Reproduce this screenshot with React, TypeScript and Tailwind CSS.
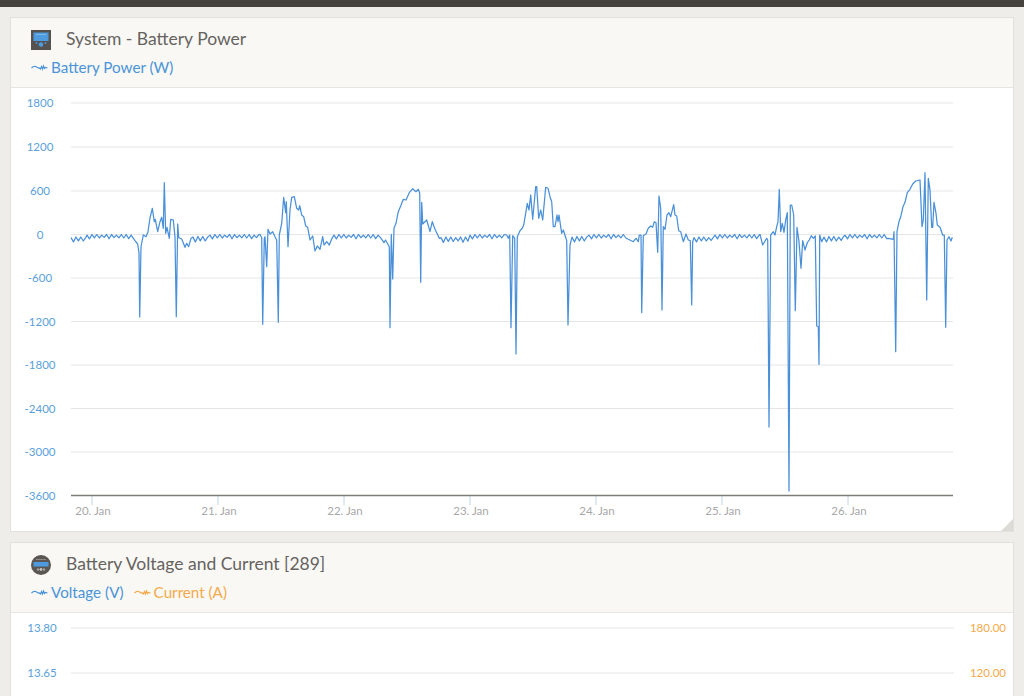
import React from "react";

type Pt = [number, number];
const BLUE = "#4a90d9";
const ORANGE = "#f5a94a";

const r = (x0: number, x1: number, top: number, bot: number): Pt[] => {
  const out: Pt[] = [];
  let i = 0;
  for (let x = x0; x < x1; x += 2.45, i++) {
    const jitter = (((i * 7) % 5) / 4) * 1.1;
    out.push([x, i % 2 === 0 ? top + (i % 6 === 0 ? 0.6 : 0) : bot + (i % 8 === 1 ? 1.2 : 0) - jitter * 0.5]);
  }
  return out;
};

const trace: Pt[] = [
  ...r(71, 87, 237, 241),
  ...r(87, 133, 234.5, 238),
  [135, 240.7], [137.7, 244], [139, 253], [139.7, 317], [141, 246.7], [143.3, 235], [146, 236.7], [148, 231.7],
  [150, 218], [152.3, 208.3], [154.3, 221.7], [155.3, 219.3], [157.7, 231.7], [160, 221.7], [161.7, 217.3], [163.3, 228.3],
  [164.3, 182.7], [165.7, 233.3], [167, 227.3], [169.3, 238.3], [170.7, 219.3], [173.3, 220], [175, 236.7], [176.3, 316.7],
  [177.7, 224], [178.7, 237.7], [181.7, 239], [185, 247.3], [186.7, 243.3], [188.7, 246.7], [191, 238.3],
  ...r(193, 210, 236.5, 241),
  ...r(210, 260, 234.5, 238),
  [260, 234.3], [261.7, 238], [262.7, 324.3], [264.3, 238.3], [265, 236.7], [266.7, 266.7], [268, 229.3], [270, 234],
  [272.7, 231.7], [275, 236.7], [276.7, 240], [278.3, 322.3], [279.3, 235], [281.7, 223.3], [283.7, 197.3], [285.7, 212.7],
  [286.3, 201.7], [288, 246.7], [290, 210], [291.7, 197.3], [294.3, 196.7], [296.7, 208.3], [298.7, 210], [299.7, 205.7],
  [301.7, 215], [303.7, 216.7], [305.7, 226], [307.7, 227.3], [310, 240], [312.7, 236], [315, 251], [317.3, 246], [320, 249.3],
  [322.7, 236.7], [324, 245], [326.7, 241.7], [329.3, 245], [332, 238.3],
  ...r(334, 382, 234.5, 238),
  [384, 242.7], [385.5, 240], [388.3, 245], [389.3, 247], [390, 327.7], [391.3, 234.3], [392.7, 279], [394, 228.3],
  [396, 223.3], [398.3, 211.7], [400.7, 206], [403.3, 199.3], [406, 200], [409.3, 192.7], [412.7, 188.7], [416, 191.7],
  [418.3, 189.3], [419.7, 193.3], [420.7, 282.3], [421.7, 202.3], [422.7, 224], [426.7, 220], [430, 231.7], [432.3, 221.7],
  [435, 229.3], [439.3, 238.3],
  ...r(441, 470, 237, 241.5),
  ...r(470, 506, 234.5, 238),
  [506.7, 235], [508.3, 238.3], [509.7, 235], [511, 327.7], [512.7, 235.7], [514.7, 238.3], [516, 354], [517.3, 236.7],
  [520, 230.7], [522.3, 228.3], [523.7, 225], [525.7, 213.3], [527.3, 203.3], [529, 210], [530.7, 195], [532.7, 219.3],
  [535.7, 186.7], [536.7, 186.7], [538.7, 218.3], [540.7, 210], [542.7, 220], [545.7, 187.3], [548, 188.3], [550, 196.7],
  [551.7, 201.7], [553.3, 226.7], [555, 226.7], [557, 215], [558, 221.7], [559, 215], [561.7, 233.3], [563.3, 230], [566, 238.3],
  [566.7, 240.7], [568, 325], [570, 245],
  ...r(572, 587, 236.5, 241),
  ...r(589, 627, 234.5, 238),
  [628.3, 239.3], [633.3, 241.7], [636, 238.3], [638.3, 241.7], [639.3, 235], [641, 235], [641.7, 312.7], [643.3, 235.7],
  [646, 234], [648.3, 228.3], [650.7, 226], [652.7, 227.3], [654.3, 221.7], [656, 222.7], [657.7, 252.3], [659, 196],
  [660.7, 208.3], [662, 310], [663.3, 226.7], [665, 229.3], [667, 215], [669, 212.7], [670.7, 216.7], [673.7, 204.7],
  [675, 215], [676.7, 216], [678.7, 230.7], [680.7, 231.7], [683.3, 241.7], [686, 234], [688.3, 240], [690.3, 240.7],
  [691.7, 305], [692.7, 241.7],
  ...r(694, 715, 237, 241),
  ...r(715, 760, 234.5, 238),
  [760, 234.3], [762.7, 245], [766.7, 238.3], [767.7, 240], [769, 427], [770.7, 235], [773.3, 231.7], [775, 235],
  [776.7, 226.7], [778, 221.7], [779.3, 189.3], [780.7, 231.7], [782.3, 223.3], [784, 232.3], [785.7, 220], [787.3, 212.7],
  [789, 491], [790.3, 205], [791.7, 205], [793.7, 215], [795.3, 310.7], [797, 227.3], [799, 241.7], [801, 268.3],
  [802.7, 240.7], [805, 250], [807.3, 242.7], [809.3, 240], [811.3, 235.7], [813.3, 238.3], [815.3, 236], [816.7, 326],
  [818.3, 326.7], [819, 364.3], [819.7, 235], [821.7, 241.7],
  ...r(824, 845, 236.5, 241),
  ...r(845, 888, 234.5, 238),
  [888.3, 238.3], [893.3, 239.3], [894, 231.7], [895.7, 351.7], [897, 231.7], [899, 221.7], [901, 215.7], [903, 206.7],
  [905, 202.3], [907.3, 192.7], [910, 189.3], [912.7, 184], [915.7, 181], [920, 180], [922, 226.7], [923.3, 220], [925, 172.7],
  [926.7, 300], [928.3, 178.3], [930, 190], [931.7, 227.3], [932.7, 227.3], [934, 202.3], [936, 213.3], [937.3, 225],
  [940, 227.3], [942.7, 235], [944.3, 235], [945.7, 327.3], [947, 240], [949, 236.7], [951, 241], [952.3, 237.3],
];

const OX = 11;
const OY = 88;
const points = trace.map(([x, y]) => `${(x - OX).toFixed(1)},${(y - OY).toFixed(1)}`).join(" ");

const yTicks: [string, number][] = [
  ["1800", 103], ["1200", 147], ["600", 191], ["0", 234.5], ["-600", 278], ["-1200", 321.5],
  ["-1800", 365], ["-2400", 408.5], ["-3000", 452],
];
const xTicks: [string, number][] = [
  ["20. Jan", 92], ["21. Jan", 218], ["22. Jan", 344], ["23. Jan", 470], ["24. Jan", 596], ["25. Jan", 722], ["26. Jan", 848],
];

function Squiggle({ color }: { color: string }) {
  return (
    <svg width="17" height="8" viewBox="0 0 17 8" fill="none" className="shrink-0">
      <path
        d="M0.5 5 C2 3.5 3 3 4.5 3.5 S7 5.5 8.5 5 L9.5 6 L10.5 3.5 L11.5 6 L12.5 3 L13.5 5.5 L14.5 4.5 L16.5 5"
        stroke={color}
        strokeWidth="1.2"
      />
    </svg>
  );
}

function Legend({ color, label }: { color: string; label: string }) {
  return (
    <span className="flex items-center gap-[3px] text-[15.2px] leading-5" style={{ color }}>
      <Squiggle color={color} />
      {label}
    </span>
  );
}

function DisplayIcon() {
  return (
    <svg width="20" height="20" viewBox="0 0 20 20" className="shrink-0">
      <rect width="20" height="20" fill="#55524f" />
      <rect x="2.5" y="2.5" width="15" height="8.5" fill="#4f9be0" />
      <rect x="5" y="4" width="10" height="1" fill="#7bb8ec" />
      <circle cx="10" cy="14.5" r="2.3" fill="#4f9be0" />
      <circle cx="5.5" cy="13" r="0.9" fill="#4f9be0" />
      <circle cx="14.5" cy="13" r="0.9" fill="#4f9be0" />
    </svg>
  );
}

function MonitorIcon() {
  return (
    <svg width="20" height="20" viewBox="0 0 20 20" className="shrink-0">
      <circle cx="10" cy="10" r="10" fill="#5a5753" />
      <rect x="2.5" y="7" width="15" height="4.5" fill="#4f9be0" />
      <rect x="5" y="4" width="10" height="1" fill="#8d8a86" />
      <circle cx="7" cy="14.5" r="1.2" fill="#a5a29d" />
      <circle cx="10" cy="14.5" r="1.4" fill="#c5c2bd" />
      <circle cx="13" cy="14.5" r="1.2" fill="#a5a29d" />
    </svg>
  );
}

function Card({
  icon,
  title,
  legend,
  children,
}: {
  icon: React.ReactNode;
  title: string;
  legend: React.ReactNode;
  children: React.ReactNode;
}) {
  return (
    <section className="relative border border-[#e2e1dc] bg-white">
      <header className="h-[70px] border-b border-[#e6e5e0] bg-[#f9f8f5] pl-5 pt-3">
        <div className="flex h-5 items-center gap-[15px]">
          {icon}
          <h2 className="pb-[2px] text-[17.5px] leading-5 text-[#66635f]">{title}</h2>
        </div>
        <div className="mt-[7px] flex items-center gap-[10px]">{legend}</div>
      </header>
      {children}
    </section>
  );
}

export default function App() {
  return (
    <div
      className="h-[696px] w-[1024px] overflow-hidden bg-[#eeede9]"
      style={{ fontFamily: '"Lato", "Open Sans", sans-serif' }}
    >
      <div className="h-[7px] bg-[#45423e]" />
      <div className="flex flex-col gap-[10px] pl-[10px] pr-[10px] pt-[10px]">
        <Card
          icon={<DisplayIcon />}
          title="System - Battery Power"
          legend={<Legend color="#4a94d8" label="Battery Power (W)" />}
        >
          <div className="relative h-[443px]">
            <svg width="1002" height="443" className="block" style={{ fontFamily: '"Lato", sans-serif' }}>
              {yTicks.map(([label, y]) => (
                <g key={label}>
                  <line x1={71 - OX} x2={953 - OX} y1={y - OY} y2={y - OY} stroke="#e6e6e6" />
                  <text x={40 - OX} y={y - OY + 4} textAnchor="middle" fontSize="11.5" fill="#5a9fdc">
                    {label}
                  </text>
                </g>
              ))}
              <text x={40 - OX} y={495.5 - OY + 4} textAnchor="middle" fontSize="11.5" fill="#5a9fdc">
                -3600
              </text>
              {xTicks.map(([label, x]) => (
                <g key={label}>
                  <line x1={x - OX} x2={x - OX} y1={496 - OY} y2={505 - OY} stroke="#c0d4ea" />
                  <text x={x - OX + 1} y={515 - OY} textAnchor="middle" fontSize="11.5" fill="#a8a8a8">
                    {label}
                  </text>
                </g>
              ))}
              <polyline points={points} fill="none" stroke={BLUE} strokeWidth="1.25" strokeLinejoin="round" />
              <line x1={71 - OX} x2={953 - OX} y1={495.5 - OY} y2={495.5 - OY} stroke="#7d7c78" strokeWidth="1.5" />
            </svg>
            <div className="absolute bottom-0 right-0 h-3 w-3 bg-[#dcdbd6] [clip-path:polygon(100%_0,100%_100%,0_100%)]" />
          </div>
        </Card>
        <Card
          icon={<MonitorIcon />}
          title="Battery Voltage and Current [289]"
          legend={
            <>
              <Legend color="#4a94d8" label="Voltage (V)" />
              <Legend color={ORANGE} label="Current (A)" />
            </>
          }
        >
          <svg width="1002" height="120" className="block" style={{ fontFamily: '"Lato", sans-serif' }}>
            {[
              ["13.80", "180.00", 15],
              ["13.65", "120.00", 60],
            ].map(([l, rr, y]) => (
              <g key={l as string}>
                <line x1={60} x2={943} y1={y as number} y2={y as number} stroke="#e6e6e6" />
                <text x={31} y={(y as number) + 4} textAnchor="middle" fontSize="11.5" fill="#5a9fdc">
                  {l}
                </text>
                <text x={977} y={(y as number) + 4} textAnchor="middle" fontSize="11.5" fill={ORANGE}>
                  {rr}
                </text>
              </g>
            ))}
          </svg>
        </Card>
      </div>
    </div>
  );
}
